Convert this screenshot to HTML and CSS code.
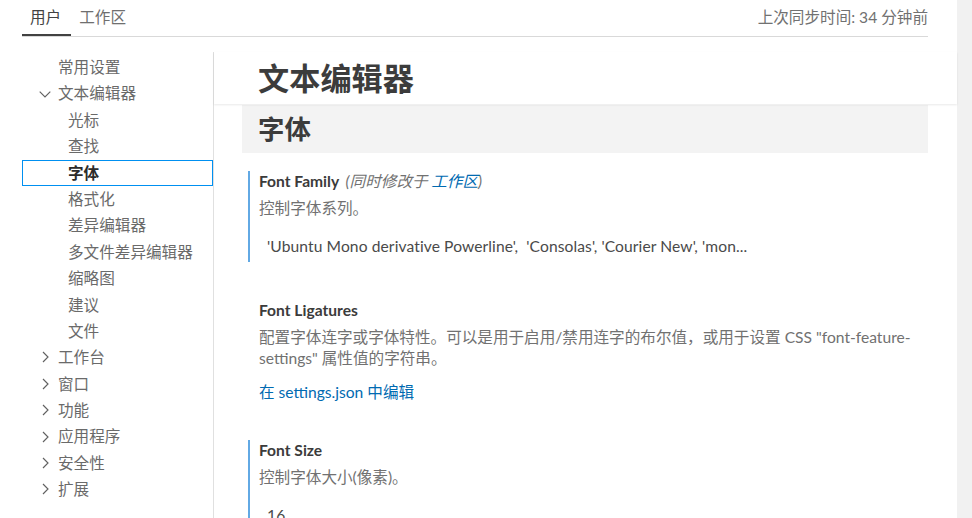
FILE: index.html
```html
<!DOCTYPE html>
<html lang="zh-CN">
<head>
<meta charset="utf-8">
<title>设置</title>
<link rel="stylesheet" href="styles.css">
</head>
<body>
<div class="page">
  <div class="column">
    <div class="tabs">
      <div class="tab-list">
        <div class="tab active">用户</div>
        <div class="tab">工作区</div>
      </div>
      <div class="sync">上次同步时间: 34 分钟前</div>
    </div>
    <div class="body">
      <nav class="toc">
        <div class="row l1"><span class="chev"></span><span>常用设置</span></div>
        <div class="row l1"><span class="chev"><svg viewBox="0 0 16 16" width="16" height="16"><path d="M2.7 5.6 L8 10.9 L13.3 5.6" /></svg></span><span>文本编辑器</span></div>
        <div class="row l2">光标</div>
        <div class="row l2">查找</div>
        <div class="row l2 selected">字体</div>
        <div class="row l2">格式化</div>
        <div class="row l2">差异编辑器</div>
        <div class="row l2">多文件差异编辑器</div>
        <div class="row l2">缩略图</div>
        <div class="row l2">建议</div>
        <div class="row l2">文件</div>
        <div class="row l1"><span class="chev"><svg viewBox="0 0 16 16" width="16" height="16"><path d="M6 3 L11 8 L6 13" /></svg></span><span>工作台</span></div>
        <div class="row l1"><span class="chev"><svg viewBox="0 0 16 16" width="16" height="16"><path d="M6 3 L11 8 L6 13" /></svg></span><span>窗口</span></div>
        <div class="row l1"><span class="chev"><svg viewBox="0 0 16 16" width="16" height="16"><path d="M6 3 L11 8 L6 13" /></svg></span><span>功能</span></div>
        <div class="row l1"><span class="chev"><svg viewBox="0 0 16 16" width="16" height="16"><path d="M6 3 L11 8 L6 13" /></svg></span><span>应用程序</span></div>
        <div class="row l1"><span class="chev"><svg viewBox="0 0 16 16" width="16" height="16"><path d="M6 3 L11 8 L6 13" /></svg></span><span>安全性</span></div>
        <div class="row l1"><span class="chev"><svg viewBox="0 0 16 16" width="16" height="16"><path d="M6 3 L11 8 L6 13" /></svg></span><span>扩展</span></div>
      </nav>
      <main class="main">
        <div class="group-header">文本编辑器</div>
        <div class="content">
          <div class="section-title">字体</div>
          <div class="setting modified first">
            <div class="title">Font Family <span class="also">(同时修改于 <span class="link">工作区</span>)</span></div>
            <div class="desc">控制字体系列。</div>
            <div class="value">'Ubuntu Mono derivative Powerline',&nbsp; 'Consolas', 'Courier New', 'mon...</div>
          </div>
          <div class="setting second">
            <div class="title">Font Ligatures</div>
            <div class="desc">配置字体连字或字体特性。可以是用于启用/禁用连字的布尔值，或用于设置 CSS "font-feature-settings" 属性值的字符串。</div>
            <div class="edit-link">在 settings.json 中编辑</div>
          </div>
          <div class="setting modified third">
            <div class="title">Font Size</div>
            <div class="desc">控制字体大小(像素)。</div>
            <div class="value">16</div>
          </div>
        </div>
      </main>
    </div>
  </div>
  <div class="scrollbar"></div>
</div>
</body>
</html>
```

FILE: styles.css
```css
html, body {
  margin: 0;
  padding: 0;
  height: 100%;
  overflow: hidden;
  background: #ffffff;
}

body {
  font-family: "Segoe UI", "Lato", "Noto Sans CJK SC", sans-serif;
  font-size: 15.6px;
  color: #616161;
}

.page {
  display: flex;
  height: 518px;
}

.column {
  flex: 1;
  min-width: 0;
  display: flex;
  flex-direction: column;
}

.scrollbar {
  width: 15px;
  background: #f1f1f1;
}

.tabs {
  margin: 0 29px 0 22px;
  height: 36px;
  border-bottom: 1px solid #d9d9d9;
  display: flex;
  justify-content: space-between;
  align-items: flex-start;
}

.tab-list {
  display: flex;
}

.tab {
  height: 34px;
  line-height: 34px;
  padding: 0 10px 0 8px;
  color: #6f6f6f;
  border-bottom: 2px solid transparent;
}

.tab.active {
  color: #424242;
  border-bottom-color: #424242;
}

.sync {
  line-height: 34px;
  color: #717171;
}

.body {
  flex: 1;
  display: flex;
  margin-top: 15px;
  margin-left: 22px;
  min-height: 0;
}

.toc {
  width: 191px;
  border-right: 1px solid #e0e0e0;
  padding-top: 2px;
}

.row {
  height: 26.4px;
  line-height: 26.4px;
  display: flex;
  align-items: center;
  white-space: nowrap;
  box-sizing: border-box;
  color: #6a6a6a;
}

.row.l1 {
  padding-left: 15px;
}

.row.l2 {
  padding-left: 46px;
}

.chev {
  width: 16px;
  height: 16px;
  margin-right: 5px;
  display: flex;
}

.chev svg {
  fill: none;
  stroke: #616161;
  stroke-width: 1.15;
}

.row.selected {
  border: 1px solid #0090f1;
  padding-left: 45px;
  font-weight: 700;
  color: #2b2b2b;
}

.main {
  flex: 1;
  min-width: 0;
}

.group-header {
  height: 52px;
  line-height: 52px;
  padding-left: 44px;
  font-size: 31.2px;
  font-weight: 700;
  color: #3c3c3c;
  box-shadow: 0 1px 2px rgba(0, 0, 0, 0.09);
  position: relative;
}

.content {
  padding: 1px 29px 0 28px;
}

.section-title {
  height: 48px;
  line-height: 48px;
  padding-left: 16px;
  background: #f3f3f3;
  font-size: 26.4px;
  font-weight: 700;
  color: #3c3c3c;
}

.setting {
  padding: 0 0 3px 9px;
  margin-left: 6px;
  border-left: 2px solid transparent;
}

.setting.modified {
  border-left-color: #62a9e4;
}

.setting.first {
  margin-top: 18px;
}

.setting.second {
  margin-top: 38px;
}

.setting.third {
  margin-top: 34px;
}

.title {
  line-height: 20px;
  font-weight: 700;
  color: #3b3b3b;
}

.also {
  font-weight: 400;
  font-style: italic;
  color: #717171;
  margin-left: 3px;
}

.link {
  color: #006ab1;
}

.desc {
  margin-top: 7px;
  line-height: 21px;
  color: #717171;
}

.value {
  margin-top: 14px;
  line-height: 26px;
  padding-left: 8px;
  color: #4a4a4a;
  white-space: nowrap;
  letter-spacing: 0.1px;
}

.edit-link {
  margin-top: 13px;
  line-height: 21px;
  color: #006ab1;
}
```
